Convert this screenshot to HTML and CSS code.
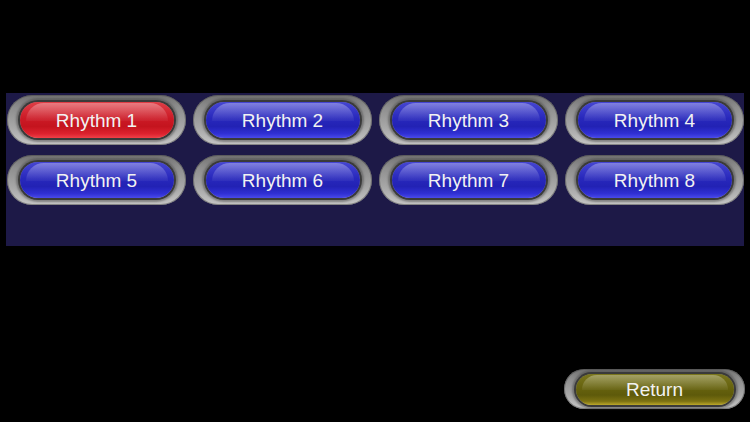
FILE: index.html
```html
<!DOCTYPE html>
<html>
<head>
<meta charset="utf-8">
<link rel="stylesheet" href="styles.css">
</head>
<body>
<div class="screen">
  <div class="panel">
    <div class="grid">
      <div class="btn"><div class="pill red"><span>Rhythm 1</span></div></div>
      <div class="btn"><div class="pill blue"><span>Rhythm 2</span></div></div>
      <div class="btn"><div class="pill blue"><span>Rhythm 3</span></div></div>
      <div class="btn"><div class="pill blue"><span>Rhythm 4</span></div></div>
      <div class="btn"><div class="pill blue"><span>Rhythm 5</span></div></div>
      <div class="btn"><div class="pill blue"><span>Rhythm 6</span></div></div>
      <div class="btn"><div class="pill blue"><span>Rhythm 7</span></div></div>
      <div class="btn"><div class="pill blue"><span>Rhythm 8</span></div></div>
    </div>
  </div>
  <div class="footer">
    <div class="btn return"><div class="pill olive"><span>Return</span></div></div>
  </div>
</div>
</body>
</html>
```

FILE: styles.css
```css
html, body {
  margin: 0;
  padding: 0;
  background: #000;
  width: 750px;
  height: 422px;
  overflow: hidden;
}
.screen {
  display: flex;
  flex-direction: column;
  width: 750px;
  height: 422px;
  font-family: "Liberation Sans", Arial, sans-serif;
}
.panel {
  margin: 93px 0 0 6px;
  width: 738px;
  height: 153px;
  background: #1d1947;
  box-sizing: border-box;
  padding: 2px 0 0 1px;
}
.grid {
  display: grid;
  grid-template-columns: repeat(4, 179px);
  grid-auto-rows: 50px;
  column-gap: 7px;
  row-gap: 10px;
}
.btn {
  display: flex;
  align-items: center;
  justify-content: center;
  border-radius: 999px;
  background: linear-gradient(180deg, #727272 0%, #8e8e8e 25%, #a8a8a8 65%, #c6c6c6 100%);
  box-shadow: inset 0 0 0 1px rgba(70,70,70,0.5);
}
.pill {
  position: relative;
  width: 154px;
  height: 36px;
  border-radius: 999px;
  display: flex;
  align-items: center;
  justify-content: center;
  box-shadow: 0 0 0 2px #3a3a3a, 0 0 2px 4px rgba(70,70,70,0.5);
  overflow: hidden;
}
.pill::before {
  content: "";
  position: absolute;
  top: 1px;
  left: 6px;
  right: 6px;
  height: 50%;
  border-radius: 999px 999px 40% 40% / 999px 999px 30% 30%;
  background: linear-gradient(180deg, rgba(255,255,255,0.32), rgba(255,255,255,0.12) 70%, rgba(255,255,255,0.04));
}
.pill span {
  position: relative;
  color: #f2f2f2;
  font-size: 19px;
  line-height: 1;
  margin-top: 1px;
}
.blue {
  background: linear-gradient(180deg, #4646d2 0%, #2828bc 45%, #2222b4 68%, #3030d4 88%, #4a4aea 100%);
}
.red {
  background: linear-gradient(180deg, #de3e46 0%, #cc1a26 45%, #c4141e 68%, #dc222e 88%, #f04048 100%);
}
.olive {
  background: linear-gradient(180deg, #7a761e 0%, #66620e 45%, #5e5a0a 68%, #7c7212 88%, #bca82a 100%);
}
.footer {
  display: flex;
  justify-content: flex-end;
  margin-top: 123px;
  padding-right: 5px;
}
.return {
  width: 181px;
  height: 40px;
}
.return .pill {
  width: 158px;
  height: 31px;
}
```
